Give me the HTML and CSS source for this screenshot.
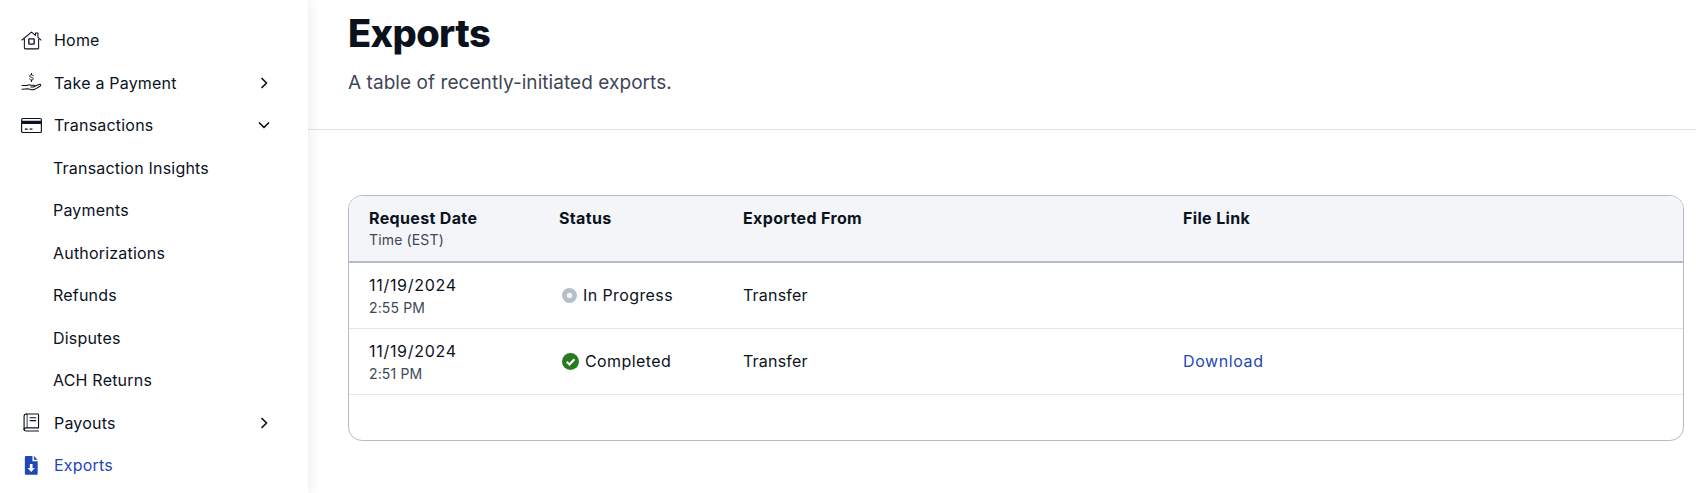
FILE: index.html
```html
<!DOCTYPE html>
<html lang="en">
<head>
<meta charset="utf-8">
<title>Exports</title>
<link rel="stylesheet" href="styles.css">
</head>
<body>
<div class="app">
  <nav class="sidebar">
    <a class="nav-item">
      <svg class="nav-icon" viewBox="0 0 22 20" fill="none" stroke="currentColor" stroke-width="1.100" stroke-linejoin="round" stroke-linecap="round"><path d="M1 9.500 11 1.200l4.200 3.400V2h2.600v4.600L21 9.500"/><path d="M3.500 8.600V18a.8.8 0 0 0 .8.8h13.400a.8.8 0 0 0 .8-.8V8.600"/><rect x="8.200" y="8.200" width="5.600" height="5.600" rx=".6" stroke-width="1.400"/></svg>
      <span class="nav-label">Home</span>
    </a>
    <a class="nav-item">
      <svg class="nav-icon" viewBox="0 0 22 20" fill="none" stroke="currentColor" stroke-width="1.100" stroke-linecap="round" stroke-linejoin="round"><path d="M1 13.200h5.500c1.400-1 2.600-.9 3.800-.3h3c1.200 0 1.200 1.800 0 1.800h-3"/><path d="M13.800 14.200l5.200-2.200c1.600-.5 2.400 1 1 1.900l-5.600 3.300c-1 .5-2 .6-3 .4L7 16.600l-6 .6"/><path d="M12.800 3c-.3-.8-1-1.200-1.800-1.200-1 0-1.900.5-1.900 1.400 0 1.900 3.800 1 3.800 2.900 0 .9-.9 1.400-1.900 1.400-.8 0-1.600-.4-1.900-1.200M11 .2v1.600M11 7.500v1.600" stroke-width="1"/></svg>
      <span class="nav-label">Take a Payment</span>
      <svg class="nav-chevron" viewBox="0 0 12 12" fill="none" stroke="currentColor" stroke-width="1.700" stroke-linecap="round" stroke-linejoin="round"><path d="M4 1.500 8.500 6 4 10.500"/></svg>
    </a>
    <a class="nav-item">
      <svg class="nav-icon" viewBox="0 0 22 20" fill="none"><rect x=".6" y="2.600" width="20.800" height="14.800" rx="1.400" stroke="currentColor" stroke-width="1.200"/><rect x="1" y="5" width="20" height="3.400" fill="currentColor"/><path d="M4 13.800h3M9 13.800h3" stroke="currentColor" stroke-width="1.200"/></svg>
      <span class="nav-label">Transactions</span>
      <svg class="nav-chevron" viewBox="0 0 12 12" fill="none" stroke="currentColor" stroke-width="1.700" stroke-linecap="round" stroke-linejoin="round"><path d="M1.500 4 6 8.500 10.500 4"/></svg>
    </a>
    <a class="nav-item nav-sub">Transaction Insights</a>
    <a class="nav-item nav-sub">Payments</a>
    <a class="nav-item nav-sub">Authorizations</a>
    <a class="nav-item nav-sub">Refunds</a>
    <a class="nav-item nav-sub">Disputes</a>
    <a class="nav-item nav-sub">ACH Returns</a>
    <a class="nav-item">
      <svg class="nav-icon" viewBox="0 0 22 20" fill="none" stroke="currentColor" stroke-width="1.200" stroke-linejoin="round" stroke-linecap="round"><path d="M5.600 1H17.600a.8.8 0 0 1 .8.8v13.800H5.400c-1.300 0-2.200.7-2.200 1.800"/><path d="M3.200 17.400V3.400C3.200 2 4.200 1 5.600 1"/><path d="M3.200 17.400c0 .9.9 1.600 2.200 1.600h13"/><path d="M6.400 1.400v13.800" opacity=".7"/><path d="M9.500 5h6M9.500 8h6"/></svg>
      <span class="nav-label">Payouts</span>
      <svg class="nav-chevron" viewBox="0 0 12 12" fill="none" stroke="currentColor" stroke-width="1.700" stroke-linecap="round" stroke-linejoin="round"><path d="M4 1.500 8.500 6 4 10.500"/></svg>
    </a>
    <a class="nav-item nav-active">
      <svg class="nav-icon" viewBox="0 0 22 20"><path fill="currentColor" d="M5 0h7v5.500h5.500V18.800a1 1 0 0 1-1 1H5a1 1 0 0 1-1-1V1a1 1 0 0 1 1-1Zm8.500 0 4 4h-4Z"/><path fill="#fff" d="M9.300 8.500h2.800v4h2.400l-3.800 4.300-3.800-4.300h2.400Z"/></svg>
      <span class="nav-label">Exports</span>
    </a>
  </nav>
  <main class="main">
    <header class="page-head">
      <h1 class="page-title">Exports</h1>
      <p class="page-desc">A table of recently-initiated exports.</p>
    </header>
    <section class="table-card">
      <div class="row row-head">
        <div class="col-date"><div class="th">Request Date</div><div class="sub">Time (EST)</div></div>
        <div class="col-status th">Status</div>
        <div class="col-from th">Exported From</div>
        <div class="col-link th">File Link</div>
      </div>
      <div class="row row-body">
        <div class="col-date"><div class="date">11/19/2024</div><div class="sub">2:55 PM</div></div>
        <div class="col-status status">
          <svg class="status-icon" viewBox="0 0 16 16"><circle cx="8" cy="8" r="8" fill="#b6bfc9"/><circle cx="8" cy="8" r="2.900" fill="#fff" opacity=".85"/></svg>In Progress
        </div>
        <div class="col-from">Transfer</div>
        <div class="col-link"></div>
      </div>
      <div class="row row-body">
        <div class="col-date"><div class="date">11/19/2024</div><div class="sub">2:51 PM</div></div>
        <div class="col-status status">
          <svg class="status-icon status-icon-done" viewBox="0 0 16 16"><circle cx="8" cy="8" r="8" fill="#2a7a1f"/><path d="M4.400 8.300 7 10.800l4.700-5" fill="none" stroke="#fff" stroke-width="2"/></svg>Completed
        </div>
        <div class="col-from">Transfer</div>
        <div class="col-link"><a class="link">Download</a></div>
      </div>
    </section>
  </main>
</div>
</body>
</html>
```
FILE: styles.css
```css
* { box-sizing: border-box; }
html, body { margin: 0; padding: 0; height: 100%; overflow: hidden; background: #fff; }
body { font-family: "Inter", "Liberation Sans", sans-serif; color: #0b121d; font-size: 16px; letter-spacing: .2px; }

.app { display: flex; height: 493px; }

.sidebar {
  width: 308px;
  flex: none;
  padding: 19px 0 0 21px;
  background: #fff;
  box-shadow: 0 0 14px rgba(20, 30, 50, .1);
  position: relative;
}
.nav-item {
  display: flex;
  align-items: center;
  height: 42.5px;
  padding-right: 38px;
  color: #0b121d;
}
.nav-icon { width: 21px; height: 19px; flex: none; margin-right: 12px; }
.nav-label { flex: 1; }
.nav-chevron { width: 12px; height: 12px; flex: none; }
.nav-sub { padding-left: 32px; }
.nav-active { color: #1f47b8; }

.main { flex: 1; min-width: 0; }
.page-head {
  height: 130px;
  padding: 8px 0 0 40px;
  border-bottom: 1px solid #dfe2e8;
}
.page-title { margin: 0; font-size: 38px; line-height: 50px; font-weight: 800; letter-spacing: -.6px; color: #0b121d; }
.page-desc { margin: 12px 0 0; font-size: 19px; line-height: 26px; color: #3f4656; letter-spacing: .06px; }

.table-card {
  margin: 65px 12px 0 40px;
  height: 246px;
  border: 1px solid #b4bcc6;
  border-radius: 14px;
  overflow: hidden;
}
.row { display: flex; align-items: center; padding-left: 20px; }
.row-head { height: 67px; background: #f3f5f9; border-bottom: 2px solid #b4bcc6; }
.row-body { height: 66px; border-bottom: 1px solid #e3e6ec; padding-bottom: 1px; }
.col-date { width: 190px; }
.col-status { width: 184px; }
.col-from { width: 440px; }
.col-link { flex: 1; }
.th { font-weight: 700; line-height: 22px; letter-spacing: .35px; }
.row-head .col-status, .row-head .col-from, .row-head .col-link { align-self: flex-start; margin-top: 11px; }
.sub { font-size: 14px; color: #404756; line-height: 20px; margin-top: 1px; letter-spacing: .15px; }
.row-body .sub { margin-top: 2px; }
.date { line-height: 22px; margin-top: 1px; letter-spacing: .7px; }
.status { display: flex; align-items: center; padding-left: 3px; letter-spacing: .4px; }
.status-icon { width: 15px; height: 15px; margin-right: 6px; }
.status-icon-done { width: 17px; height: 17px; }
.link { color: #1f47b8; letter-spacing: .6px; }
```
